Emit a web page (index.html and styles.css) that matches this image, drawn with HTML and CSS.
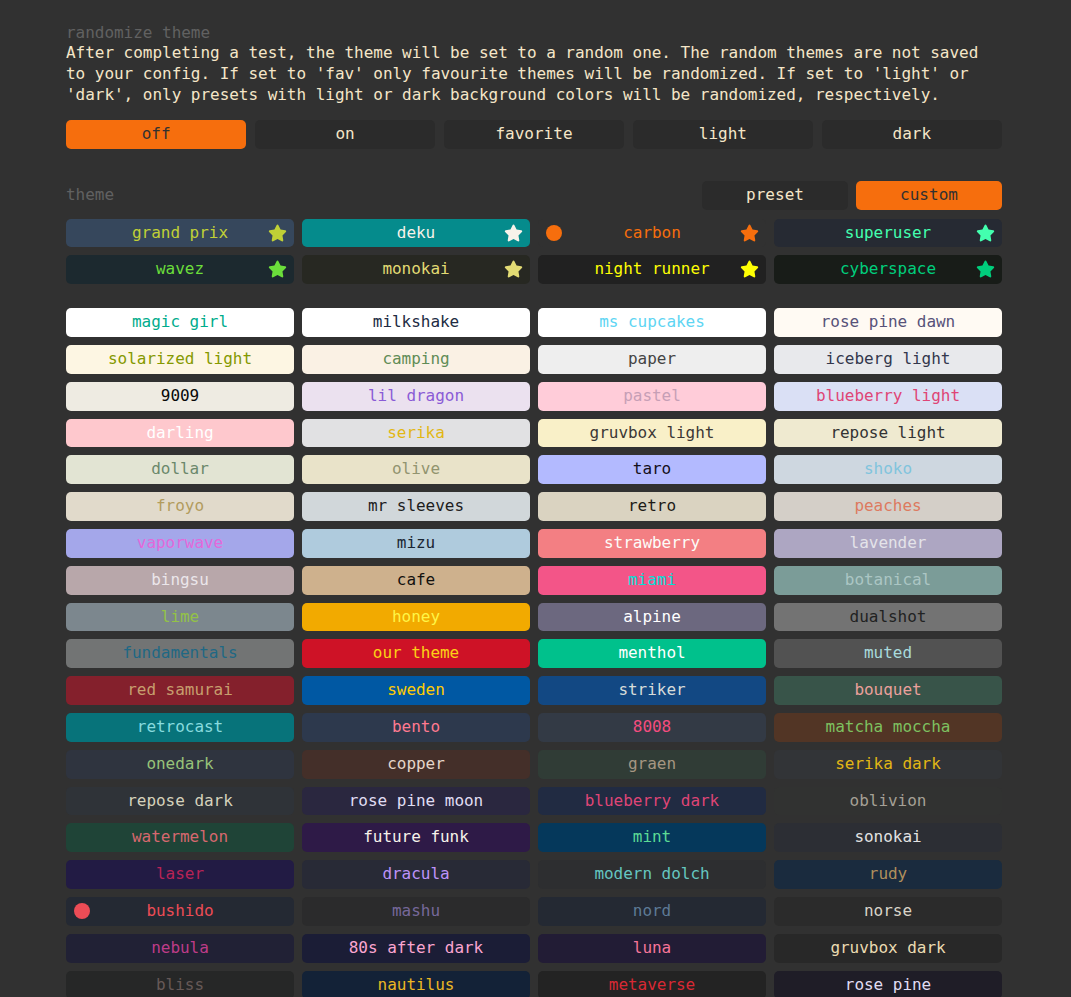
FILE: index.html
```html
<!DOCTYPE html>
<html>
<head>
<meta charset="utf-8">
<link rel="stylesheet" href="styles.css">
</head>
<body>
<svg width="0" height="0" class="defs">
  <defs>
    <symbol id="star" viewBox="0 0 576 512"><path d="M316.9 18C311.6 7 300.4 0 288.1 0s-23.4 7-28.8 18L195 150.3 51.4 171.5c-12 1.8-22 10.2-25.7 21.7s-.7 24.2 7.9 32.7L137.8 329 113.2 474.7c-2 12 3 24.2 12.9 31.3s23 8 33.8 2.3l128.3-68.5 128.3 68.5c10.8 5.7 23.9 4.9 33.8-2.3s14.9-19.3 12.9-31.3L438.5 329 542.7 225.9c8.6-8.5 11.7-21.2 7.9-32.7s-13.7-19.9-25.7-21.7L381.2 150.3 316.9 18z"/></symbol>
  </defs>
</svg>
<div class="page">
  <section class="setting">
    <div class="title">randomize theme</div>
    <div class="desc">After completing a test, the theme will be set to a random one. The random themes are not saved to your config. If set to 'fav' only favourite themes will be randomized. If set to 'light' or 'dark', only presets with light or dark background colors will be randomized, respectively.</div>
    <div class="options">
      <div class="btn active">off</div>
      <div class="btn">on</div>
      <div class="btn">favorite</div>
      <div class="btn">light</div>
      <div class="btn">dark</div>
    </div>
  </section>

  <section class="theme-section">
    <div class="theme-head">
      <div class="title">theme</div>
      <div class="tabs">
        <div class="btn">preset</div>
        <div class="btn active">custom</div>
      </div>
    </div>

    <div class="grid favs">
      <div class="tb" style="--bg:#36475c;--fg:#c0d036">grand prix<svg class="star"><use href="#star"/></svg></div>
      <div class="tb" style="--bg:#058b8c;--fg:#f7f2ea">deku<svg class="star"><use href="#star"/></svg></div>
      <div class="tb" style="--bg:#313131;--fg:#f66e0d"><span class="dot"></span>carbon<svg class="star"><use href="#star"/></svg></div>
      <div class="tb" style="--bg:#262a33;--fg:#43ffaf">superuser<svg class="star"><use href="#star"/></svg></div>
      <div class="tb" style="--bg:#1c292f;--fg:#6bde3b">wavez<svg class="star"><use href="#star"/></svg></div>
      <div class="tb" style="--bg:#272822;--fg:#e2db74">monokai<svg class="star"><use href="#star"/></svg></div>
      <div class="tb" style="--bg:#212121;--fg:#feff04">night runner<svg class="star"><use href="#star"/></svg></div>
      <div class="tb" style="--bg:#181c18;--fg:#00ce7c">cyberspace<svg class="star"><use href="#star"/></svg></div>
    </div>

    <div class="grid all">
      <div class="tb" style="--bg:#ffffff;--fg:#00ac8c">magic girl</div>
      <div class="tb" style="--bg:#ffffff;--fg:#212b43">milkshake</div>
      <div class="tb" style="--bg:#ffffff;--fg:#5ed5f3">ms cupcakes</div>
      <div class="tb" style="--bg:#fffaf3;--fg:#575279">rose pine dawn</div>

      <div class="tb" style="--bg:#fdf6e3;--fg:#859900">solarized light</div>
      <div class="tb" style="--bg:#faf1e4;--fg:#618c56">camping</div>
      <div class="tb" style="--bg:#eeeeee;--fg:#444444">paper</div>
      <div class="tb" style="--bg:#e8e9ec;--fg:#33374c">iceberg light</div>

      <div class="tb" style="--bg:#eeebe2;--fg:#080909">9009</div>
      <div class="tb" style="--bg:#ebe1ef;--fg:#8a5bd6">lil dragon</div>
      <div class="tb" style="--bg:#ffccd9;--fg:#c69fb6">pastel</div>
      <div class="tb" style="--bg:#dae0f5;--fg:#df4576">blueberry light</div>

      <div class="tb" style="--bg:#fec8cd;--fg:#ffffff">darling</div>
      <div class="tb" style="--bg:#e1e1e3;--fg:#e2b714">serika</div>
      <div class="tb" style="--bg:#f9f0c8;--fg:#3c3836">gruvbox light</div>
      <div class="tb" style="--bg:#efead0;--fg:#333333">repose light</div>

      <div class="tb" style="--bg:#e2e4d3;--fg:#6b886b">dollar</div>
      <div class="tb" style="--bg:#e9e3c9;--fg:#92946f">olive</div>
      <div class="tb" style="--bg:#b3baff;--fg:#130f1a">taro</div>
      <div class="tb" style="--bg:#ced7e0;--fg:#81c4dd">shoko</div>

      <div class="tb" style="--bg:#e1dacb;--fg:#b29c5e">froyo</div>
      <div class="tb" style="--bg:#d1d7da;--fg:#1d1d1d">mr sleeves</div>
      <div class="tb" style="--bg:#dad3c1;--fg:#1d1b17">retro</div>
      <div class="tb" style="--bg:#d4cfc8;--fg:#dd7a5f">peaches</div>

      <div class="tb" style="--bg:#a4a7ea;--fg:#e368da">vaporwave</div>
      <div class="tb" style="--bg:#afcbdd;--fg:#1a2633">mizu</div>
      <div class="tb" style="--bg:#f37f83;--fg:#fcfcf8">strawberry</div>
      <div class="tb" style="--bg:#ada6c2;--fg:#e4e3e9">lavender</div>

      <div class="tb" style="--bg:#b8a7aa;--fg:#ebe6ea">bingsu</div>
      <div class="tb" style="--bg:#ceb18d;--fg:#14120f">cafe</div>
      <div class="tb" style="--bg:#f35588;--fg:#05dfd7">miami</div>
      <div class="tb" style="--bg:#7b9c98;--fg:#abc6c4">botanical</div>

      <div class="tb" style="--bg:#7c878e;--fg:#93c247">lime</div>
      <div class="tb" style="--bg:#f2aa00;--fg:#fff546">honey</div>
      <div class="tb" style="--bg:#6c687f;--fg:#ffffff">alpine</div>
      <div class="tb" style="--bg:#737373;--fg:#212222">dualshot</div>

      <div class="tb" style="--bg:#727474;--fg:#1f6884">fundamentals</div>
      <div class="tb" style="--bg:#ce1226;--fg:#fcd116">our theme</div>
      <div class="tb" style="--bg:#00c18c;--fg:#ffffff">menthol</div>
      <div class="tb" style="--bg:#525252;--fg:#a8dadc">muted</div>

      <div class="tb" style="--bg:#84202c;--fg:#c79e6e">red samurai</div>
      <div class="tb" style="--bg:#0058a3;--fg:#ffcc02">sweden</div>
      <div class="tb" style="--bg:#124883;--fg:#d7dcda">striker</div>
      <div class="tb" style="--bg:#385449;--fg:#eaa09c">bouquet</div>

      <div class="tb" style="--bg:#07737a;--fg:#88dbdf">retrocast</div>
      <div class="tb" style="--bg:#2d394d;--fg:#ff7a90">bento</div>
      <div class="tb" style="--bg:#333a45;--fg:#f44c7f">8008</div>
      <div class="tb" style="--bg:#523525;--fg:#7ec160">matcha moccha</div>

      <div class="tb" style="--bg:#2f343f;--fg:#98c379">onedark</div>
      <div class="tb" style="--bg:#442f29;--fg:#e6d6cb">copper</div>
      <div class="tb" style="--bg:#303c36;--fg:#a59682">graen</div>
      <div class="tb" style="--bg:#323437;--fg:#e2b714">serika dark</div>

      <div class="tb" style="--bg:#2f3338;--fg:#d6d2bc">repose dark</div>
      <div class="tb" style="--bg:#2a273f;--fg:#e0def4">rose pine moon</div>
      <div class="tb" style="--bg:#212b42;--fg:#df4576">blueberry dark</div>
      <div class="tb" style="--bg:#313231;--fg:#a5a096">oblivion</div>

      <div class="tb" style="--bg:#1f4437;--fg:#d6686f">watermelon</div>
      <div class="tb" style="--bg:#2e1a47;--fg:#f7f2ea">future funk</div>
      <div class="tb" style="--bg:#05385b;--fg:#5cdb95">mint</div>
      <div class="tb" style="--bg:#2c2e34;--fg:#e2e2e3">sonokai</div>

      <div class="tb" style="--bg:#221b44;--fg:#b82356">laser</div>
      <div class="tb" style="--bg:#282a36;--fg:#bd93f9">dracula</div>
      <div class="tb" style="--bg:#2d2e30;--fg:#65c6c0">modern dolch</div>
      <div class="tb" style="--bg:#1a2b3e;--fg:#af8f5c">rudy</div>

      <div class="tb" style="--bg:#242933;--fg:#ec4c56"><span class="dot"></span>bushido</div>
      <div class="tb" style="--bg:#2b2b2c;--fg:#76689a">mashu</div>
      <div class="tb" style="--bg:#242933;--fg:#5e7a96">nord</div>
      <div class="tb" style="--bg:#2b2b2b;--fg:#d9d4c9">norse</div>

      <div class="tb" style="--bg:#212135;--fg:#be3c88">nebula</div>
      <div class="tb" style="--bg:#1b1d36;--fg:#fca6d1">80s after dark</div>
      <div class="tb" style="--bg:#221c35;--fg:#f67599">luna</div>
      <div class="tb" style="--bg:#282828;--fg:#ebdbb2">gruvbox dark</div>

      <div class="tb" style="--bg:#262727;--fg:#665957">bliss</div>
      <div class="tb" style="--bg:#132237;--fg:#ebb723">nautilus</div>
      <div class="tb" style="--bg:#232323;--fg:#d82934">metaverse</div>
      <div class="tb" style="--bg:#1f1d27;--fg:#e0def4">rose pine</div>

      <div class="tb" style="--bg:#091f2c;--fg:#f5b1cc">dark magic girl</div>
      <div class="tb" style="--bg:#161821;--fg:#84a0c6">iceberg dark</div>
      <div class="tb" style="--bg:#1e1e1e;--fg:#007acc">vscode</div>
      <div class="tb" style="--bg:#191a1b;--fg:#79a617">terminal</div>
    </div>
  </section>
</div>
</body>
</html>
```

FILE: styles.css
```css
html, body {
  margin: 0;
  padding: 0;
  background: #313131;
}

body {
  font-family: "DejaVu Sans Mono", "Liberation Mono", monospace;
  font-size: 16px;
  color: #f5e6c8;
}

.defs {
  position: absolute;
  width: 0;
  height: 0;
}

.page {
  width: 936px;
  margin-left: 66px;
  padding-top: 24px;
}

.title {
  color: #616161;
  line-height: 18px;
  letter-spacing: -0.03px;
}

.desc {
  margin-top: 0;
  line-height: 21px;
  letter-spacing: -0.03px;
}

.options {
  display: grid;
  grid-template-columns: repeat(5, 1fr);
  gap: 8.5px;
  margin-top: 15px;
}

.btn {
  background: #2b2b2b;
  color: #f5e6c8;
  border-radius: 5px;
  height: 28.8px;
  line-height: 28.8px;
  text-align: center;
}

.btn.active {
  background: #f66e0d;
  color: #313131;
}

.theme-section {
  margin-top: 32px;
}

.theme-head {
  display: flex;
  align-items: center;
  justify-content: space-between;
}

.tabs {
  display: grid;
  grid-template-columns: 1fr 1fr;
  gap: 8px;
  width: 300px;
}

.grid {
  display: grid;
  grid-template-columns: repeat(4, 1fr);
  gap: 8px;
}

.favs {
  margin-top: 9px;
}

.all {
  margin-top: 24px;
}

.tb {
  position: relative;
  height: 28.8px;
  line-height: 28.8px;
  border-radius: 5px;
  text-align: center;
  background: var(--bg);
  color: var(--fg);
  white-space: nowrap;
  letter-spacing: -0.03px;
}

.star {
  position: absolute;
  right: 7px;
  top: 5px;
  width: 19px;
  height: 18px;
  fill: var(--fg);
}

.dot {
  position: absolute;
  left: 8px;
  top: 6.4px;
  width: 16px;
  height: 16px;
  border-radius: 50%;
  background: var(--fg);
}
```
